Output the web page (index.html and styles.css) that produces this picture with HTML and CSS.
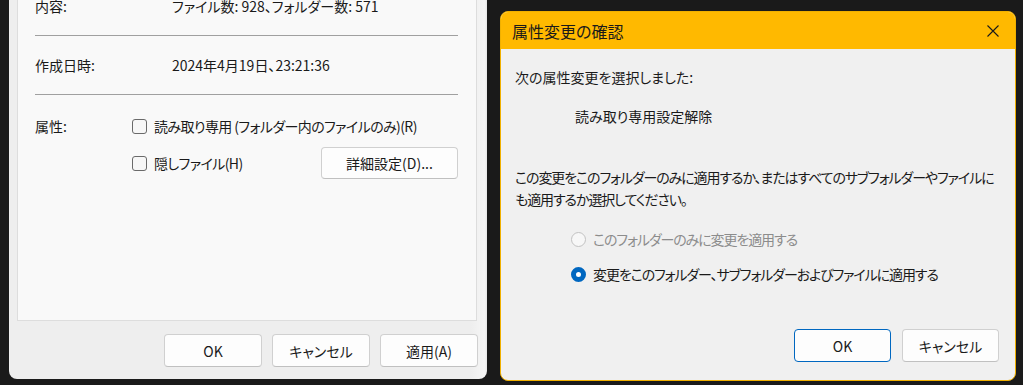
FILE: index.html
```html
<!DOCTYPE html>
<html lang="ja">
<head>
    <meta charset="UTF-8">
    <title>属性変更の確認</title>
    <link rel="stylesheet" href="styles.css">
</head>
<body>
    <div class="props">
        <div class="panel">
            <div class="row">
                <span>内容:</span>
                <span>ファイル数: 928、フォルダー数: 571</span>
            </div>
            <hr>
            <div class="row">
                <span>作成日時:</span>
                <span>2024年4月19日、23:21:36</span>
            </div>
            <hr>
            <div class="attrs">
                <span class="attr-label">属性:</span>
                <div class="attr-list">
                    <label class="check"><span class="box"></span>読み取り専用 (フォルダー内のファイルのみ)(R)</label>
                    <div class="attr-line">
                        <label class="check"><span class="box"></span>隠しファイル(H)</label>
                        <button class="btn btn-wide">詳細設定(D)...</button>
                    </div>
                </div>
            </div>
        </div>
        <div class="props-buttons">
            <button class="btn">OK</button>
            <button class="btn">キャンセル</button>
            <button class="btn">適用(A)</button>
        </div>
    </div>

    <div class="dialog">
        <div class="titlebar">
            <span class="title">属性変更の確認</span>
            <svg class="close" width="12" height="12" viewBox="0 0 12 12">
                <path d="M0.5 0.5 L11.5 11.5 M11.5 0.5 L0.5 11.5" stroke="#1a1a1a" stroke-width="1.1" fill="none"/>
            </svg>
        </div>
        <div class="dialog-body">
            <p class="line">次の属性変更を選択しました:</p>
            <p class="line change">読み取り専用設定解除</p>
            <p class="para">この変更をこのフォルダーのみに適用するか、またはすべてのサブフォルダーやファイルに<br>も適用するか選択してください。</p>
            <label class="radio disabled"><span class="dot"></span>このフォルダーのみに変更を適用する</label>
            <label class="radio checked"><span class="dot"></span>変更をこのフォルダー、サブフォルダーおよびファイルに適用する</label>
            <div class="dialog-buttons">
                <button class="btn btn-default">OK</button>
                <button class="btn">キャンセル</button>
            </div>
        </div>
    </div>
</body>
</html>
```

FILE: styles.css
```css
body {
    margin: 0;
    height: 385px;
    overflow: hidden;
    background-color: #1a1a1a;
    font-family: "Noto Sans CJK JP", "Noto Sans", sans-serif;
    font-size: 14px;
    font-feature-settings: "palt";
    color: #1a1a1a;
    display: flex;
    align-items: flex-start;
}
p {
    margin: 0;
}
.props {
    margin: -9px 0 0 9px;
    width: 478px;
    height: 388px;
    background: linear-gradient(to right, #eeeeee 0, #eeeeee 462px, #f6f6f6 476px, #e6e6e6 478px);
    border-radius: 0 0 8px 8px;
    display: flex;
    flex-direction: column;
}
.panel {
    margin: 0 10px 0 8px;
    height: 330px;
    box-sizing: border-box;
    background-color: #f9f9f9;
    border: 1px solid #dddddd;
    border-top: none;
    padding: 0 18px 0 17px;
}
.row {
    display: grid;
    grid-template-columns: 137px 1fr;
    height: 30px;
    line-height: 30px;
}
hr {
    border: none;
    border-top: 1px solid #a0a0a0;
    margin: 14px 0 14px;
}
.attrs {
    display: grid;
    grid-template-columns: 97px 1fr;
    margin-top: 20px;
    line-height: 22px;
}
.attr-list {
    display: flex;
    flex-direction: column;
    gap: 10px;
}
.attr-line {
    display: flex;
    justify-content: space-between;
    align-items: center;
}
.check {
    display: flex;
    align-items: center;
    gap: 6px;
    letter-spacing: -0.6px;
}
.box {
    width: 13px;
    height: 13px;
    border: 1px solid #6a6a6a;
    border-radius: 3px;
    background-color: #f7f7f7;
    margin-right: 1px;
}
.btn {
    font-family: inherit;
    font-size: 14px;
    font-feature-settings: "palt";
    color: #1a1a1a;
    background-color: #fdfdfd;
    border: 1px solid #d0d0d0;
    border-bottom-color: #c0c0c0;
    border-radius: 4px;
    width: 98px;
    height: 33px;
    padding: 0;
}
.btn-wide {
    width: 137px;
    height: 32px;
}
.props-buttons {
    display: flex;
    justify-content: flex-end;
    gap: 10px;
    margin-top: 13px;
    padding-right: 9px;
}
.dialog {
    margin: 11px 0 0 13px;
    width: 516px;
    height: 370px;
    box-sizing: border-box;
    border: 1px solid #f0b000;
    border-radius: 8px;
    background-color: #f0f0f0;
    overflow: hidden;
    display: flex;
    flex-direction: column;
}
.titlebar {
    height: 37px;
    background-color: #ffb900;
    display: flex;
    align-items: center;
    justify-content: space-between;
    padding: 0 16px 0 11px;
}
.title {
    font-size: 16px;
    line-height: 20px;
    margin-top: 1px;
}
.close {
    margin-top: 1px;
}
.dialog-body {
    flex: 1;
    display: flex;
    flex-direction: column;
    padding: 18px 16px 18px 14px;
}
.line {
    line-height: 20px;
}
.change {
    margin: 19px 0 0 60px;
}
.para {
    margin-top: 40px;
    line-height: 22px;
    white-space: nowrap;
    letter-spacing: -1.1px;
}
.radio {
    display: flex;
    align-items: center;
    gap: 6px;
    line-height: 22px;
    margin: 18px 0 0 56px;
    letter-spacing: -1.1px;
}
.radio + .radio {
    margin-top: 13px;
}
.dot {
    width: 13px;
    height: 13px;
    border-radius: 50%;
    border: 1px solid #c2c2c2;
    background-color: #f7f7f7;
    box-sizing: content-box;
    margin-right: 1px;
}
.disabled {
    color: #8c8c8c;
}
.checked .dot {
    width: 5px;
    height: 5px;
    border: 5px solid #0067c0;
    background-color: #ffffff;
}
.dialog-buttons {
    margin-top: auto;
    display: flex;
    justify-content: flex-end;
    gap: 11px;
}
.dialog-buttons .btn {
    width: 97px;
}
.btn-default {
    border: 1px solid #0067c0;
}
```
